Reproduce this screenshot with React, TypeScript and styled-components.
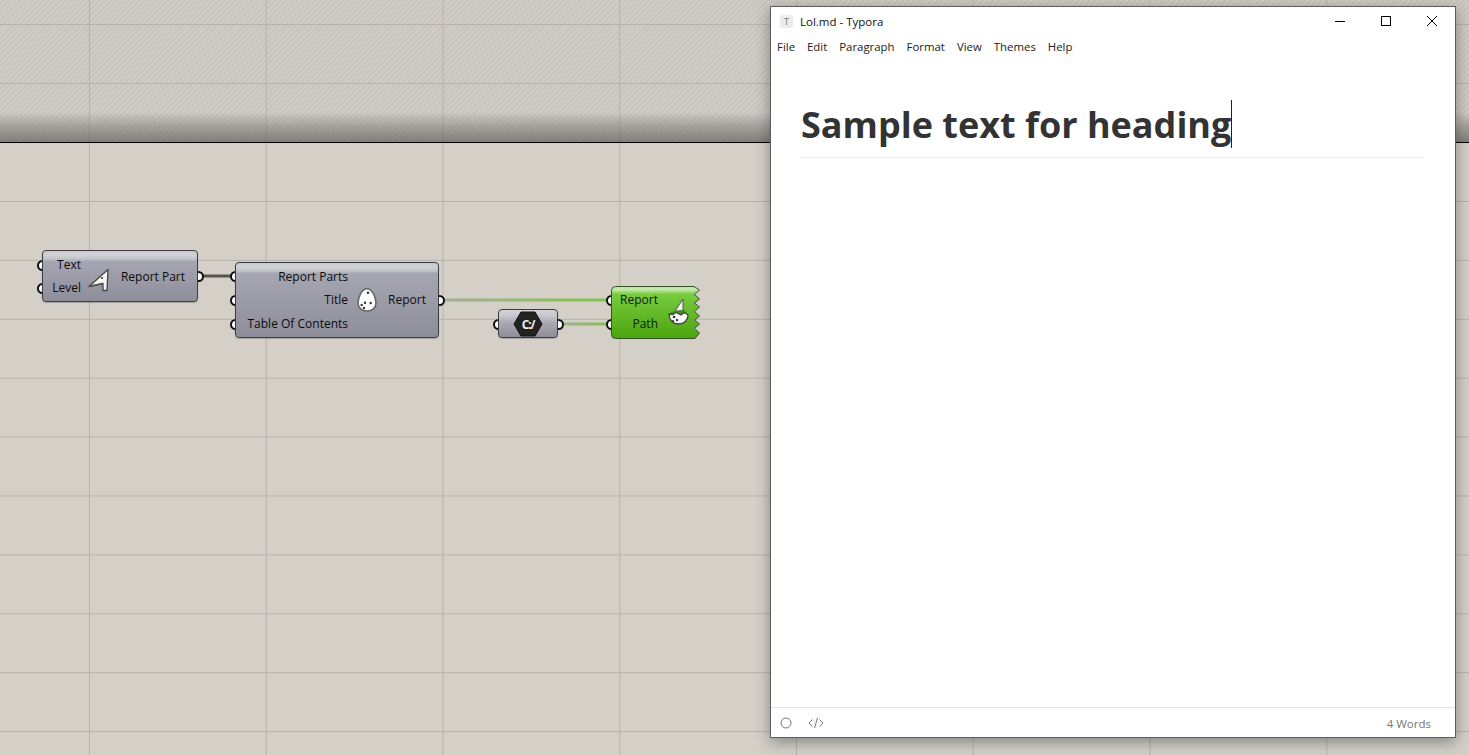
import React from "react";
import styled, { createGlobalStyle } from "styled-components";

const GlobalStyle = createGlobalStyle`
  html, body {
    margin: 0;
    padding: 0;
    width: 100%;
    height: 100%;
    overflow: hidden;
    background: #d4d0c8;
  }
  #root { height: 100%; }
`;

const gridLines = `
  linear-gradient(to right, #b7b3ac 1px, transparent 1px),
  linear-gradient(to bottom, #b7b3ac 1px, transparent 1px)
`;

const Page = styled.div`
  position: relative;
  width: 1469px;
  height: 755px;
  display: flex;
  flex-direction: column;
  overflow: hidden;
  font-family: "Open Sans", "Noto Sans", sans-serif;
`;

const TopBand = styled.div`
  position: relative;
  height: 142px;
  flex: none;
  border-bottom: 1px solid #000;
  background-color: #cdcac3;
  background-image:
    linear-gradient(to bottom, transparent 112px, rgba(90, 90, 86, 0.35) 126px, rgba(80, 80, 76, 0.62) 142px),
    ${gridLines},
    repeating-linear-gradient(135deg, #d0cdc6 0 2px, #c8c5be 2px 4px);
  background-size: 100% 100%, 176.75px 58.9px, 176.75px 58.9px, auto;
  background-position: 0 0, 89px 24px, 89px 24px, 0 0;
`;

const Canvas = styled.div`
  position: relative;
  flex: 1;
  background-color: #d4d0c8;
  background-image: ${gridLines};
  background-size: 176.75px 58.9px;
  background-position: 89px 58px;
`;

const Wires = styled.svg`
  position: absolute;
  left: 0;
  top: 0;
  width: 1469px;
  height: 612px;
  pointer-events: none;
`;

const Node = styled.div<{ $x: number; $y: number; $w: number; $h: number }>`
  position: absolute;
  left: ${(p) => p.$x}px;
  top: ${(p) => p.$y}px;
  width: ${(p) => p.$w}px;
  height: ${(p) => p.$h}px;
  box-sizing: border-box;
  border: 1px solid #3c3c40;
  border-radius: 4px;
  background: linear-gradient(
    to bottom,
    #c9c9d0 0,
    #d2d2d8 4px,
    #bcbcc4 9px,
    #a6a6b2 10px,
    #8e8e9a 100%
  );
  box-shadow: 0 1px 1px rgba(70, 70, 70, 0.3);
  font-size: 12px;
  line-height: 16px;
  color: #0c0c0c;
`;

const NodeBody = styled.div<{ $gap: number; $pad: string }>`
  height: 100%;
  box-sizing: border-box;
  display: flex;
  align-items: center;
  gap: ${(p) => p.$gap}px;
  padding: ${(p) => p.$pad};
`;

const Inputs = styled.div<{ $row: number; $width: number }>`
  width: ${(p) => p.$width}px;
  flex: none;
  display: grid;
  grid-auto-rows: ${(p) => p.$row}px;
  align-items: center;
  justify-items: end;
  white-space: nowrap;
`;

const Output = styled.div`
  margin-left: auto;
  white-space: nowrap;
`;

const Port = styled.span<{ $x: number; $y: number }>`
  position: absolute;
  left: ${(p) => p.$x - 5.5}px;
  top: ${(p) => p.$y - 5.5}px;
  width: 11px;
  height: 11px;
  box-sizing: border-box;
  border: 2.5px solid #0e0e0e;
  border-radius: 50%;
  background: #fff;
`;

const GreenShape = styled.svg`
  position: absolute;
  left: 611px;
  top: 143px;
  width: 90px;
  height: 53px;
`;

const GreenBody = styled.div`
  position: absolute;
  left: 611px;
  top: 143px;
  width: 90px;
  height: 53px;
  box-sizing: border-box;
  padding: 2px 43px 0 0;
  display: grid;
  grid-auto-rows: 24px;
  align-items: center;
  justify-items: end;
  font-size: 12px;
  line-height: 16px;
  color: #08200a;
`;

const NodeIcon = styled.svg`
  flex: none;
  display: block;
`;

const GreenIcon = styled.svg`
  position: absolute;
  left: 666px;
  top: 154px;
`;

const ParamNode = styled(Node)`
  display: flex;
  align-items: center;
  justify-content: center;
  padding-right: 1px;
  background: linear-gradient(to bottom, #d4d4da 0, #c6c6cc 6px, #a8a8b4 13px, #8e8e9a 100%);
`;

const Window = styled.div`
  position: absolute;
  left: 770px;
  top: 6px;
  width: 686px;
  height: 732px;
  box-sizing: border-box;
  border: 1px solid #5c5c5c;
  background: #fff;
  box-shadow: 0 4px 14px rgba(40, 40, 40, 0.45);
  display: flex;
  flex-direction: column;
`;

const TitleBar = styled.div`
  height: 28px;
  flex: none;
  display: flex;
  align-items: center;
  padding-left: 9px;
  font-size: 11.5px;
  color: #111;
`;

const AppIcon = styled.span`
  width: 13px;
  height: 13px;
  margin-right: 7px;
  border-radius: 2px;
  background: #ececec;
  color: #777;
  font-size: 9px;
  line-height: 13px;
  text-align: center;
`;

const TitleText = styled.span`
  flex: 1;
`;

const WinButton = styled.button`
  width: 46px;
  height: 28px;
  padding: 0;
  border: 0;
  background: none;
  display: flex;
  align-items: center;
  justify-content: center;
`;

const MenuBar = styled.div`
  height: 24px;
  flex: none;
  box-sizing: border-box;
  padding: 0 0 2px 6px;
  display: flex;
  align-items: center;
  gap: 12px;
  font-size: 11.4px;
  color: #222;
`;

const Editor = styled.div`
  flex: 1;
  padding: 41px 31px 0 30px;
`;

const Heading = styled.h1`
  margin: 0;
  height: 58px;
  box-sizing: border-box;
  border-bottom: 1px solid #eeeeee;
  font-family: "Open Sans", sans-serif;
  font-size: 36px;
  font-weight: 700;
  line-height: 49px;
  color: #333333;
  white-space: nowrap;
`;

const Caret = styled.span`
  display: inline-block;
  width: 1px;
  height: 48px;
  vertical-align: top;
  background: #222;
`;

const StatusBar = styled.div`
  height: 30px;
  flex: none;
  box-sizing: border-box;
  border-top: 1px solid #e2e2e2;
  display: flex;
  align-items: center;
  gap: 16px;
  padding: 1px 24px 0 9px;
  font-size: 11.5px;
  color: #777;
`;

const WordCount = styled.span`
  margin-left: auto;
`;

function App() {
  return (
    <Page>
      <GlobalStyle />
      <TopBand />
      <Canvas>
        <Wires viewBox="0 0 1469 612">
          <defs>
            <linearGradient id="wireReport" gradientUnits="userSpaceOnUse" x1="441" y1="0" x2="609" y2="0">
              <stop offset="0" stopColor="#a9ad97" />
              <stop offset="1" stopColor="#7fc546" />
            </linearGradient>
            <linearGradient id="wirePath" gradientUnits="userSpaceOnUse" x1="560" y1="0" x2="609" y2="0">
              <stop offset="0" stopColor="#a3ad8e" />
              <stop offset="1" stopColor="#86c350" />
            </linearGradient>
          </defs>
          <path d="M198 133 H235" stroke="#55544f" strokeWidth="3" fill="none" />
          <path d="M441 157 H611" stroke="url(#wireReport)" strokeWidth="3" fill="none" />
          <path d="M560 181 H611" stroke="url(#wirePath)" strokeWidth="3" fill="none" />
        </Wires>

        <Port $x={42} $y={122} />
        <Port $x={42} $y={145} />
        <Port $x={198} $y={133} />
        <Port $x={235} $y={133} />
        <Port $x={235} $y={157} />
        <Port $x={235} $y={181} />
        <Port $x={439} $y={157} />
        <Port $x={498} $y={181} />
        <Port $x={558} $y={181} />
        <Port $x={611} $y={157} />
        <Port $x={611} $y={181} />

        <Node $x={42} $y={107} $w={156} $h={52}>
          <NodeBody $gap={7} $pad="1px 12px 0 0">
            <Inputs $row={23.5} $width={38}>
              <span>Text</span>
              <span>Level</span>
            </Inputs>
            <NodeIcon width="22" height="30" viewBox="0 0 22 30">
              <path d="M1 24.5 L20 7.5 L19 28.5 L15 28.5 L15 21.5 Z" fill="#f4f4f4" stroke="#444" strokeWidth="1.3" strokeLinejoin="round" />
              <path d="M1 24.5 L15 21.5" stroke="#555" strokeWidth="1.3" fill="none" />
              <circle cx="14" cy="16" r="1.1" fill="#444" />
            </NodeIcon>
            <Output>Report Part</Output>
          </NodeBody>
        </Node>

        <Node $x={235} $y={119} $w={204} $h={76}>
          <NodeBody $gap={8} $pad="0 12px 0 0">
            <Inputs $row={23.5} $width={112}>
              <span>Report Parts</span>
              <span>Title</span>
              <span>Table Of Contents</span>
            </Inputs>
            <NodeIcon width="22" height="24" viewBox="0 0 22 24">
              <path d="M11 .8 C16 .8 20 9 20 15 C20 20 16 23 11 23 C6 23 2 20 2 15 C2 9 6 .8 11 .8 Z" fill="#fff" stroke="#666" strokeWidth="1.6" />
              <circle cx="12" cy="4.7" r="1.3" fill="#333" />
              <circle cx="14.7" cy="15" r="1.2" fill="#333" />
              <circle cx="5.7" cy="17" r="1.2" fill="#333" />
              <circle cx="9" cy="14.7" r="1.2" fill="#333" />
              <circle cx="8" cy="20" r="1.2" fill="#333" />
            </NodeIcon>
            <Output>Report</Output>
          </NodeBody>
        </Node>

        <ParamNode $x={498} $y={166} $w={60} $h={29}>
          <NodeIcon width="30" height="26" viewBox="0 0 30 26">
            <path d="M8 1 H22 L29 13 L22 25 H8 L1 13 Z" fill="#222" stroke="#111" />
            <text x="15" y="17.5" textAnchor="middle" fontSize="12" fontWeight="700" letterSpacing="-1.2" fontFamily="Open Sans, sans-serif" fill="#f0f0f0">C:/</text>
          </NodeIcon>
        </ParamNode>

        <GreenShape viewBox="0 0 90 53">
          <defs>
            <linearGradient id="greenFill" x1="0" y1="0" x2="0" y2="1">
              <stop offset="0" stopColor="#bfe6a3" />
              <stop offset="0.06" stopColor="#c4e9ab" />
              <stop offset="0.15" stopColor="#79ca3f" />
              <stop offset="1" stopColor="#4aa50e" />
            </linearGradient>
          </defs>
          <path
            d="M4.5 .5 H83 L88.5 4 L83.5 8.5 L88.5 13 L83.5 17 L88.5 21 L83.5 25.5 L88.5 30 L83.5 34 L88.5 38 L83.5 42.5 L88.5 47 L84 52.5 H4.5 Q.5 52.5 .5 48.5 V4.5 Q.5 .5 4.5 .5 Z"
            fill="url(#greenFill)"
            stroke="#34512a"
          />
        </GreenShape>
        <GreenBody>
          <span>Report</span>
          <span>Path</span>
        </GreenBody>
        <GreenIcon width="24" height="30" viewBox="0 0 24 30">
          <path d="M9 14 L17 2 L17 14 Z" fill="#f2f2f2" stroke="#555" strokeWidth="1" />
          <path d="M5 15 L18 12.5 L21 17 H4 Z" fill="#3f8f18" />
          <path d="M3 17 C3 23 7 27 12.5 27 C18 27 22 23.5 22 18 L18.5 15.5 L15 18 L10 15.5 L7 17.5 Z" fill="#fafafa" stroke="#444" strokeWidth="1.3" strokeLinejoin="round" />
          <circle cx="8" cy="20" r="1.3" fill="#333" />
          <circle cx="11" cy="23" r="1.2" fill="#333" />
          <circle cx="7" cy="24" r="1.1" fill="#333" />
        </GreenIcon>
      </Canvas>

      <Window>
        <TitleBar>
          <AppIcon>T</AppIcon>
          <TitleText>Lol.md - Typora</TitleText>
          <WinButton aria-label="Minimize">
            <svg width="10" height="10" viewBox="0 0 10 10"><path d="M0 5.5 H10" stroke="#000" /></svg>
          </WinButton>
          <WinButton aria-label="Maximize">
            <svg width="10" height="10" viewBox="0 0 10 10"><rect x=".5" y=".5" width="9" height="9" fill="none" stroke="#000" /></svg>
          </WinButton>
          <WinButton aria-label="Close">
            <svg width="10" height="10" viewBox="0 0 10 10"><path d="M0 0 L10 10 M10 0 L0 10" stroke="#000" /></svg>
          </WinButton>
        </TitleBar>
        <MenuBar>
          <span>File</span>
          <span>Edit</span>
          <span>Paragraph</span>
          <span>Format</span>
          <span>View</span>
          <span>Themes</span>
          <span>Help</span>
        </MenuBar>
        <Editor>
          <Heading>
            Sample text for heading<Caret />
          </Heading>
        </Editor>
        <StatusBar>
          <svg width="12" height="12" viewBox="0 0 12 12"><circle cx="6" cy="6" r="5" fill="none" stroke="#777" /></svg>
          <svg width="16" height="12" viewBox="0 0 16 12"><path d="M4.5 2.5 L1 6 L4.5 9.5 M11.5 2.5 L15 6 L11.5 9.5 M9.5 1 L6.5 11" fill="none" stroke="#777" /></svg>
          <WordCount>4 Words</WordCount>
        </StatusBar>
      </Window>
    </Page>
  );
}

export default App;
